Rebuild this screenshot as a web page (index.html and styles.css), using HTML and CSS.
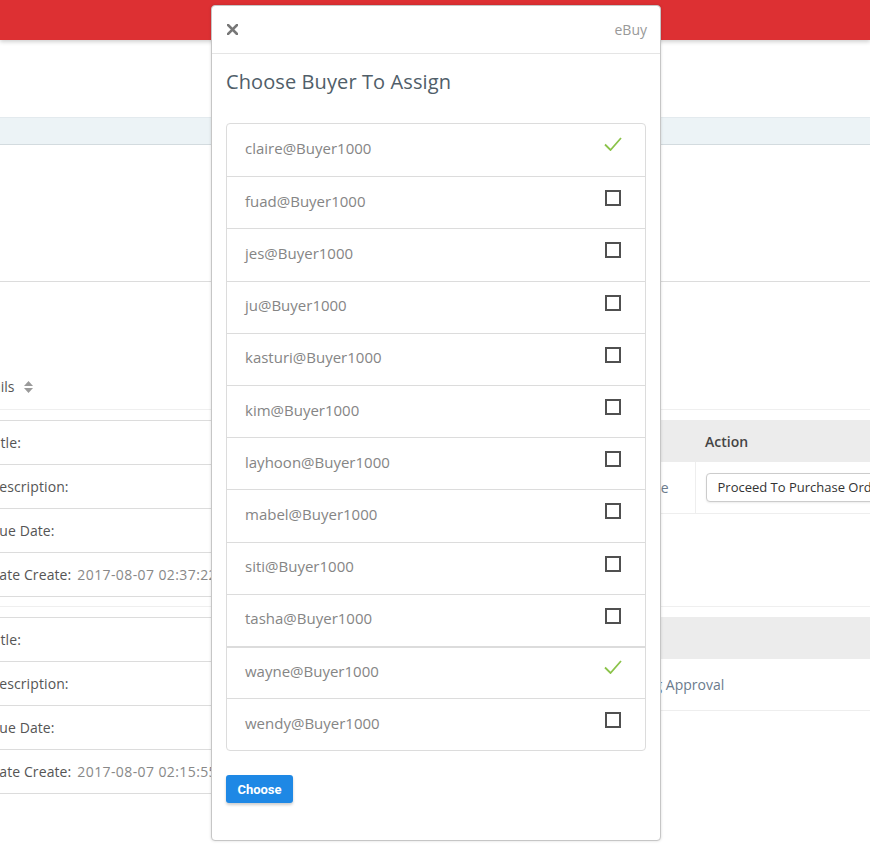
FILE: index.html
```html
<!DOCTYPE html>
<html lang="en">
<head>
<meta charset="utf-8">
<title>Choose Buyer To Assign</title>
<link rel="stylesheet" href="styles.css">
</head>
<body>
<header class="topbar"></header>
<div class="band"></div>
<section class="summary"></section>
<div class="list-head">
  <span class="head-label">Details</span>
  <svg class="sort" width="9" height="12" viewBox="0 0 9 12"><polygon points="4.5,0 9,5 0,5" fill="#9a9a9a"/><polygon points="0,7 9,7 4.5,12" fill="#9a9a9a"/></svg>
</div>
<div class="records">
  <div class="record">
    <div class="details">
      <div class="row">Title:</div>
      <div class="row">Description:</div>
      <div class="row">Due Date:</div>
      <div class="row">Date Create: <span class="value">2017-08-07 02:37:22</span></div>
    </div>
    <table class="orders">
      <thead><tr><th class="col-status">Status</th><th>Action</th></tr></thead>
      <tbody><tr><td class="status right">Pending Purchase</td><td><span class="po-btn">Proceed To Purchase Order</span></td></tr></tbody>
    </table>
  </div>
  <div class="record">
    <div class="details">
      <div class="row">Title:</div>
      <div class="row">Description:</div>
      <div class="row">Due Date:</div>
      <div class="row">Date Create: <span class="value">2017-08-07 02:15:55</span></div>
    </div>
    <table class="orders">
      <thead><tr><th class="col-ref">Ref</th><th>Status</th></tr></thead>
      <tbody><tr><td class="plain"></td><td class="status">Pending Approval</td></tr></tbody>
    </table>
  </div>
</div>

<div class="modal">
  <div class="modal-head">
    <svg class="close" width="11" height="11" viewBox="0 0 11 11"><path d="M1 1 L10 10 M10 1 L1 10" stroke="#777" stroke-width="2.6" stroke-linecap="square"/></svg>
    <span class="brand">eBuy</span>
  </div>
  <div class="modal-body">
    <h2 class="title">Choose Buyer To Assign</h2>
    <ul class="buyers">
      <li class="buyer"><span>claire@Buyer1000</span><span class="mark"><svg width="18" height="14" viewBox="0 0 18 14"><polyline points="1,7.5 6.5,13 17,1" fill="none" stroke="#8bc34a" stroke-width="1.8"/></svg></span></li>
      <li class="buyer"><span>fuad@Buyer1000</span><span class="mark"><span class="box"></span></span></li>
      <li class="buyer"><span>jes@Buyer1000</span><span class="mark"><span class="box"></span></span></li>
      <li class="buyer"><span>ju@Buyer1000</span><span class="mark"><span class="box"></span></span></li>
      <li class="buyer"><span>kasturi@Buyer1000</span><span class="mark"><span class="box"></span></span></li>
      <li class="buyer"><span>kim@Buyer1000</span><span class="mark"><span class="box"></span></span></li>
      <li class="buyer"><span>layhoon@Buyer1000</span><span class="mark"><span class="box"></span></span></li>
      <li class="buyer"><span>mabel@Buyer1000</span><span class="mark"><span class="box"></span></span></li>
      <li class="buyer"><span>siti@Buyer1000</span><span class="mark"><span class="box"></span></span></li>
      <li class="buyer"><span>tasha@Buyer1000</span><span class="mark"><span class="box"></span></span></li>
      <li class="buyer sep"><span>wayne@Buyer1000</span><span class="mark"><svg width="18" height="14" viewBox="0 0 18 14"><polyline points="1,7.5 6.5,13 17,1" fill="none" stroke="#8bc34a" stroke-width="1.8"/></svg></span></li>
      <li class="buyer"><span>wendy@Buyer1000</span><span class="mark"><span class="box"></span></span></li>
    </ul>
    <button class="choose" type="button">Choose</button>
  </div>
</div>
</body>
</html>
```

FILE: styles.css
```css
* { box-sizing: border-box; }
html, body { margin: 0; padding: 0; }
body {
  width: 870px;
  height: 853px;
  overflow: hidden;
  position: relative;
  background: #fff;
  font-family: "Open Sans", sans-serif;
  color: #555;
}

.topbar {
  height: 40px;
  background: #dd3033;
  box-shadow: 0 2px 4px rgba(0, 0, 0, 0.18);
  position: relative;
  z-index: 1;
}

.band {
  margin-top: 77px;
  height: 28px;
  background: #ecf3f6;
  border-top: 1px solid #e3eaee;
  border-bottom: 1px solid #d3dbdf;
}

.summary {
  height: 137px;
  border-bottom: 1px solid #dcdcdc;
}

.list-head {
  height: 128px;
  border-bottom: 1px solid #efefef;
  display: flex;
  align-items: flex-end;
  padding-bottom: 12px;
  font-size: 14px;
  line-height: 20px;
  color: #555;
}
.head-label { margin-left: -30px; }
.sort { margin-left: 9px; margin-bottom: 4px; }

.records {
  width: 1100px;
  margin-left: -20px;
}
.record {
  display: grid;
  grid-template-columns: 420px 680px;
  padding: 10px 0 9px;
  border-bottom: 1px solid #efefef;
}
.record:last-child { border-bottom: 0; }

.details { border-top: 1px solid #dcdcdc; }
.details .row {
  height: 44px;
  border-bottom: 1px solid #dcdcdc;
  display: flex;
  align-items: center;
  padding-left: 9px;
  font-size: 14px;
  color: #555;
  white-space: nowrap;
  letter-spacing: 0.1px;
}
.value { color: #888; margin-left: 6px; letter-spacing: 0.4px; }

.orders {
  width: 100%;
  border-collapse: collapse;
  font-size: 14px;
  align-self: start;
}
.orders th {
  height: 42px;
  padding: 0 10px;
  background: #ececec;
  text-align: left;
  font-weight: 600;
  color: #444;
}
.orders td {
  height: 51px;
  padding: 0 10px;
  border-bottom: 1px solid #eeeeee;
  white-space: nowrap;
}
.orders td + td { border-left: 1px solid #eeeeee; }
.col-status { width: 295px; }
.col-ref { width: 199px; }
.status { color: #6b7b8c; }
.status.right { text-align: right; padding-right: 26px; }
.orders td.plain + td { border-left: 0; }

.po-btn {
  display: inline-flex;
  align-items: center;
  height: 29px;
  padding: 0 11px;
  border: 1px solid #cccccc;
  border-radius: 4px;
  background: #fff;
  font-size: 13px;
  color: #333;
  box-shadow: 0 1px 2px rgba(0, 0, 0, 0.08);
}

/* modal */
.modal {
  position: absolute;
  top: 5px;
  left: 211px;
  width: 450px;
  background: #fff;
  border: 1px solid #c6c6c6;
  border-radius: 4px;
  box-shadow: 0 0 3px rgba(0, 0, 0, 0.15);
  z-index: 2;
}
.modal-head {
  height: 48px;
  border-bottom: 1px solid #e5e5e5;
  display: flex;
  align-items: center;
  justify-content: space-between;
  padding: 0 13px 0 15px;
}
.brand { font-size: 14px; color: #999; }

.modal-body { padding: 14px 14px 37px; }
.title {
  margin: 0 0 27px;
  font-size: 20px;
  line-height: 28px;
  font-weight: 400;
  color: #505e69;
  letter-spacing: 0.1px;
}

.buyers {
  list-style: none;
  margin: 0;
  padding: 0;
  border: 1px solid #dcdcdc;
  border-radius: 4px;
}
.buyer {
  height: 52.2px;
  display: flex;
  justify-content: space-between;
  align-items: center;
  padding: 0 23px 4px 18px;
  border-top: 1px solid #dcdcdc;
  font-size: 15px;
  color: #858585;
}
.buyer:first-child { border-top: 0; }
.buyer.sep { border-top-width: 2px; }
.mark {
  align-self: flex-start;
  margin-top: 13px;
  width: 18px;
  display: flex;
}
.sep .mark { margin-top: 12px; }
.box {
  width: 16px;
  height: 16px;
  margin-left: 1px;
  border: 2px solid #505050;
  background: #fff;
}

.choose {
  display: block;
  margin-top: 24px;
  width: 67px;
  height: 28px;
  padding: 0;
  border: 0;
  border-radius: 3px;
  background: #1e88e5;
  color: #fff;
  font-family: Roboto, "Liberation Sans", sans-serif;
  font-weight: 700;
  font-size: 13px;
  box-shadow: 0 2px 3px rgba(0, 0, 0, 0.2);
}
```
